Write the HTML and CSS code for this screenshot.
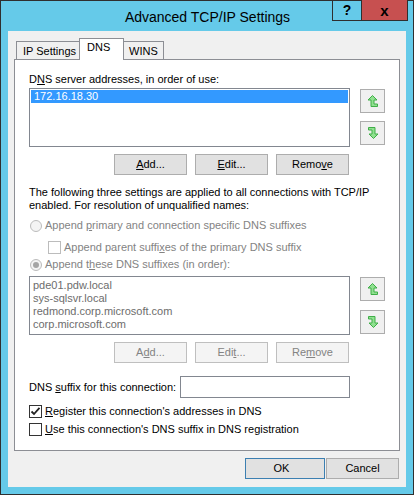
FILE: index.html
```html
<!DOCTYPE html>
<html lang="en">
<head>
    <meta charset="UTF-8">
    <meta name="viewport" content="width=device-width, initial-scale=1.0">
    <title>Advanced TCP/IP Settings</title>
    <link rel="stylesheet" href="styles.css">
</head>
<body>

    <div class="window">
        <!-- Title bar -->
        <div class="titlebar">
            <span class="title">Advanced TCP/IP Settings</span>
            <div class="caption-buttons">
                <span class="cap-btn help">?</span>
                <span class="cap-btn close">x</span>
            </div>
        </div>

        <div class="client">
            <div class="tabs">
                <span class="tab first">IP Settings</span>
                <span class="tab active">DNS</span>
                <span class="tab">WINS</span>
            </div>

            <div class="panel">
                <div class="label">D<u>N</u>S server addresses, in order of use:</div>

                <div class="list-row">
                    <div class="listbox">
                        <div class="list-item selected">172.16.18.30</div>
                    </div>
                    <div class="move-buttons">
                        <span class="move-btn">
                            <svg width="10" height="12" viewBox="0 0 10 12"><polygon points="4.5,0.5 9,5 6,5 6,9 9.5,9 9.5,11.5 3,11.5 3,5 0,5" /></svg>
                        </span>
                        <span class="move-btn">
                            <svg width="10" height="12" viewBox="0 0 10 12"><polygon points="0.5,0.5 7,0.5 7,7 10,7 5.5,11.5 1,7 4,7 4,3 0.5,3" /></svg>
                        </span>
                    </div>
                </div>

                <div class="btn-row">
                    <button class="btn"><u>A</u>dd...</button>
                    <button class="btn"><u>E</u>dit...</button>
                    <button class="btn">Remo<u>v</u>e</button>
                </div>

                <p class="note">The following three settings are applied to all connections with TCP/IP enabled. For resolution of unqualified names:</p>

                <div class="option disabled radio-row">
                    <span class="radio"></span>
                    <span>Append <u>p</u>rimary and connection specific DNS suffixes</span>
                </div>
                <div class="option disabled check-row indent">
                    <span class="check"></span>
                    <span>Append parent suffi<u>x</u>es of the primary DNS suffix</span>
                </div>
                <div class="option disabled radio-row second">
                    <span class="radio on"></span>
                    <span>Append t<u>h</u>ese DNS suffixes (in order):</span>
                </div>

                <div class="list-row suffixes">
                    <div class="listbox disabled-list">
                        <div class="list-item">pde01.pdw.local</div>
                        <div class="list-item">sys-sqlsvr.local</div>
                        <div class="list-item">redmond.corp.microsoft.com</div>
                        <div class="list-item">corp.microsoft.com</div>
                    </div>
                    <div class="move-buttons wide-gap">
                        <span class="move-btn">
                            <svg width="10" height="12" viewBox="0 0 10 12"><polygon points="4.5,0.5 9,5 6,5 6,9 9.5,9 9.5,11.5 3,11.5 3,5 0,5" /></svg>
                        </span>
                        <span class="move-btn">
                            <svg width="10" height="12" viewBox="0 0 10 12"><polygon points="0.5,0.5 7,0.5 7,7 10,7 5.5,11.5 1,7 4,7 4,3 0.5,3" /></svg>
                        </span>
                    </div>
                </div>

                <div class="btn-row">
                    <button class="btn" disabled>A<u>d</u>d...</button>
                    <button class="btn" disabled>Edi<u>t</u>...</button>
                    <button class="btn" disabled>Re<u>m</u>ove</button>
                </div>

                <div class="suffix-row">
                    <span>DNS <u>s</u>uffix for this connection:</span>
                    <span class="textbox"></span>
                </div>

                <div class="option check-row register">
                    <span class="check on">
                        <svg width="11" height="11" viewBox="0 0 11 11"><path d="M1.5 5.5 L4 8 L9.5 1.8" /></svg>
                    </span>
                    <span><u>R</u>egister this connection's addresses in DNS</span>
                </div>
                <div class="option check-row use-suffix">
                    <span class="check"></span>
                    <span><u>U</u>se this connection's DNS suffix in DNS registration</span>
                </div>
            </div>

            <div class="dialog-buttons">
                <button class="btn default">OK</button>
                <button class="btn">Cancel</button>
            </div>
        </div>
    </div>

</body>
</html>
```

FILE: styles.css
```css
* {
    margin: 0;
    padding: 0;
    box-sizing: border-box;
}

body {
    font-family: 'Liberation Sans', Arial, sans-serif;
    font-size: 11px;
    line-height: 13px;
    color: #000;
    background: #fff;
}

u {
    text-decoration: underline;
    text-underline-offset: 1px;
}

.window {
    width: 414px;
    height: 495px;
    border: 1px solid #2f2f2f;
    background: #65cae9;
    padding: 0 7px 7px 7px;
    position: relative;
}

.titlebar {
    height: 30px;
    display: flex;
    align-items: center;
    justify-content: center;
}

.title {
    font-size: 14px;
    line-height: 18px;
    margin-top: 1px;
    padding-left: 1px;
}

.caption-buttons {
    position: absolute;
    top: -1px;
    right: 5px;
    display: flex;
}

.cap-btn {
    height: 21px;
    display: flex;
    align-items: center;
    justify-content: center;
    border: 1px solid #2f2f2f;
    border-top: none;
    font-weight: bold;
    font-size: 14px;
}

.cap-btn.help {
    width: 29px;
    border-right: none;
}

.cap-btn.close {
    width: 47px;
    background: #c75050;
    font-size: 15px;
}

.client {
    height: 456px;
    background: #f0f0f0;
    padding: 7px 6px 0 6px;
}

.tabs {
    display: flex;
    align-items: flex-end;
    height: 22px;
    margin-bottom: -1px;
    padding-left: 2px;
    position: relative;
    z-index: 1;
}

.tab {
    height: 18px;
    margin-bottom: 1px;
    padding: 3px 0 0 6px;
    border: 1px solid #8c8e94;
    border-bottom: none;
    background: #f0f0f0;
    margin-left: -1px;
    white-space: nowrap;
}

.tab.first {
    margin-left: 0;
    width: 64px;
}

.tab.active {
    height: 22px;
    margin-bottom: 0;
    width: 45px;
    background: #fff;
    padding-top: 2px;
    padding-left: 7px;
}

.tab:last-child {
    width: 41px;
    padding-left: 5px;
}

.panel {
    height: 392px;
    border: 1px solid #8c8e94;
    background: #fff;
    padding: 13px 0 0 14px;
}

.list-row {
    display: flex;
    margin-top: 2px;
    height: 59px;
}

.listbox {
    width: 321px;
    height: 59px;
    border: 1px solid #828790;
    padding: 1px;
    background: #fff;
}

.list-item {
    height: 13px;
    padding-left: 3px;
}

.list-item.selected {
    background: #3399ff;
    color: #fff;
}

.disabled-list {
    padding-top: 2px;
    color: #6d6d6d;
}

.disabled-list .list-item {
    padding-left: 2px;
}

.move-buttons {
    display: flex;
    flex-direction: column;
    gap: 8px;
    margin-left: 10px;
    padding-top: 1px;
}

.move-buttons.wide-gap {
    gap: 9px;
}

.move-btn {
    width: 25px;
    height: 24px;
    border: 1px solid #adadad;
    background: #f0f0f0;
    display: flex;
    align-items: center;
    justify-content: center;
}

.move-btn svg polygon {
    fill: #90e090;
    stroke: #3fae47;
    stroke-width: 1;
}

.btn-row {
    display: flex;
    justify-content: flex-end;
    gap: 8px;
    width: 320px;
    margin-top: 7px;
}

.btn {
    width: 73px;
    height: 21px;
    font-family: 'Liberation Sans', Arial, sans-serif;
    font-size: 11px;
    line-height: 13px;
    color: #000;
    background: #e1e1e1;
    border: 1px solid #adadad;
}

.btn:disabled {
    background: #f4f4f4;
    border-color: #bfbfbf;
    color: #838383;
}

.note {
    margin-top: 11px;
    width: 345px;
}

.option {
    display: flex;
    align-items: center;
    gap: 3px;
    height: 13px;
    white-space: nowrap;
}

.option.disabled {
    color: #838383;
}

.radio-row {
    margin-top: 7px;
    padding-left: 1px;
}

.radio-row.second {
    margin-top: 4px;
}

.radio {
    width: 12px;
    height: 12px;
    border: 1px solid #bcbcbc;
    border-radius: 50%;
    background: #f4f4f4;
    display: flex;
    align-items: center;
    justify-content: center;
}

.radio.on::after {
    content: '';
    width: 6px;
    height: 6px;
    border-radius: 50%;
    background: #a5a5a5;
}

.check {
    width: 13px;
    height: 13px;
    border: 1px solid #333;
    background: #fff;
    display: flex;
    align-items: center;
    justify-content: center;
    flex-shrink: 0;
}

.option.disabled .check {
    border-color: #bcbcbc;
}

.check-row.indent {
    margin-top: 9px;
    padding-left: 19px;
}

.check svg path {
    fill: none;
    stroke: #222;
    stroke-width: 1.8;
}

.suffixes {
    margin-top: 5px;
}

.suffix-row {
    display: flex;
    align-items: center;
    justify-content: space-between;
    width: 321px;
    margin-top: 13px;
    white-space: nowrap;
}

.textbox {
    width: 170px;
    height: 22px;
    border: 1px solid #828790;
    background: #fff;
}

.register {
    margin-top: 7px;
}

.use-suffix {
    margin-top: 5px;
}

.dialog-buttons {
    display: flex;
    justify-content: flex-end;
    gap: 1px;
    margin-top: 7px;
    padding-right: 1px;
}

.btn.default {
    width: 80px;
    padding-right: 7px;
    border-color: #3c7fb1;
}
```
